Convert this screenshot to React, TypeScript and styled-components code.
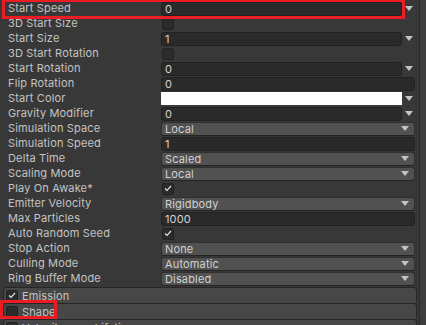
import React from "react"
import styled, { createGlobalStyle } from "styled-components"

const Global = createGlobalStyle`
    html, body {
        margin: 0;
        padding: 0;
        background: #383838;
    }
    body {
        font-family: Inter, "Noto Sans", sans-serif;
        font-size: 11px;
        letter-spacing: 0.15px;
        color: #c4c4c4;
    }
`;

const Window = styled.div`
    position: relative;
    display: flex;
    width: 426px;
    height: 325px;
    overflow: hidden;
    background: #383838;
`;
const Panel = styled.div`
    flex: 1;
    padding-top: 1px;
`;
const Scrollbar = styled.div`
    width: 6px;
    border-left: 1px solid #2b2b2b;
    background: #3e3e3e;
`;
const Row = styled.div`
    display: grid;
    grid-template-columns: 153px 1fr;
    align-items: center;
    height: 15px;
    padding: 0 4px 0 8px;
`;
const Label = styled.div`
    white-space: nowrap;
    line-height: 15px;
`;
const Control = styled.div`
    display: flex;
    align-items: center;
    height: 15px;
`;
const TextField = styled.div`
    flex: 1;
    height: 12px;
    line-height: 12px;
    padding-left: 3px;
    background: #2a2a2a;
    border: 1px solid #212121;
    border-radius: 3px;
    color: #d2d2d2;
`;
const ColorField = styled.div`
    flex: 1;
    height: 13px;
    background: #ffffff;
`;
const CurveArrow = styled.div`
    width: 13px;
    display: flex;
    justify-content: center;
    align-items: center;
`;
const Popup = styled.div`
    flex: 1;
    display: flex;
    align-items: center;
    justify-content: space-between;
    height: 12px;
    padding: 0 5px 0 3px;
    background: #515151;
    border: 1px solid #303030;
    border-bottom-color: #242424;
    border-radius: 3px;
    color: #d2d2d2;
    line-height: 12px;
`;
const Box = styled.div`
    width: 10px;
    height: 10px;
    margin-left: 1px;
    background: #2b2b2b;
    border: 1px solid #222;
    border-radius: 2px;
    display: flex;
    align-items: center;
    justify-content: center;
`;
const Modules = styled.div`
    margin: 1px 2px 0 3px;
`;
const ModuleHeader = styled.div`
    display: flex;
    align-items: center;
    gap: 4px;
    height: 15px;
    padding-left: 1px;
    background: #474747;
    border: 1px solid #262626;
    border-radius: 3px;
    margin-bottom: -1px;
    color: #c4c4c4;
`;
const Highlight = styled.div`
    position: absolute;
    border: 3px solid #ec1c24;
    pointer-events: none;
`;

const Arrow = () => (
    <svg width="8" height="5" viewBox="0 0 8 5">
        <polygon points="0,0 8,0 4,5" fill="#c4c4c4" />
    </svg>
)

const Check = ({ on }: { on?: boolean }) => (
    <Box>
        {on && (
            <svg width="8" height="7" viewBox="0 0 8 7">
                <polyline points="1,3.5 3,5.5 7,1" fill="none" stroke="#e0e0e0" strokeWidth="1.2" />
            </svg>
        )}
    </Box>
)

type Field =
    | { kind: "curve"; value: string }
    | { kind: "text"; value: string }
    | { kind: "popup"; value: string }
    | { kind: "check"; on: boolean }
    | { kind: "color" }

const rows: [string, Field][] = [
    ["Start Speed", { kind: "curve", value: "0" }],
    ["3D Start Size", { kind: "check", on: false }],
    ["Start Size", { kind: "curve", value: "1" }],
    ["3D Start Rotation", { kind: "check", on: false }],
    ["Start Rotation", { kind: "curve", value: "0" }],
    ["Flip Rotation", { kind: "text", value: "0" }],
    ["Start Color", { kind: "color" }],
    ["Gravity Modifier", { kind: "curve", value: "0" }],
    ["Simulation Space", { kind: "popup", value: "Local" }],
    ["Simulation Speed", { kind: "text", value: "1" }],
    ["Delta Time", { kind: "popup", value: "Scaled" }],
    ["Scaling Mode", { kind: "popup", value: "Local" }],
    ["Play On Awake*", { kind: "check", on: true }],
    ["Emitter Velocity", { kind: "popup", value: "Rigidbody" }],
    ["Max Particles", { kind: "text", value: "1000" }],
    ["Auto Random Seed", { kind: "check", on: true }],
    ["Stop Action", { kind: "popup", value: "None" }],
    ["Culling Mode", { kind: "popup", value: "Automatic" }],
    ["Ring Buffer Mode", { kind: "popup", value: "Disabled" }],
]

function renderField(f: Field) {
    switch (f.kind) {
        case "curve":
            return (<><TextField>{f.value}</TextField><CurveArrow><Arrow /></CurveArrow></>)
        case "text":
            return <TextField>{f.value}</TextField>
        case "popup":
            return <Popup><span>{f.value}</span><Arrow /></Popup>
        case "check":
            return <Check on={f.on} />
        case "color":
            return (<><ColorField /><CurveArrow><Arrow /></CurveArrow></>)
    }
}

const modules: [string, boolean][] = [
    ["Emission", true],
    ["Shape", false],
    ["Velocity over Lifetime", false],
]

export default function App() {
    return (
        <Window>
            <Global />
            <Panel>
                {rows.map(([label, field]) => (
                    <Row key={label}>
                        <Label>{label}</Label>
                        <Control>{renderField(field)}</Control>
                    </Row>
                ))}
                <Modules>
                    {modules.map(([name, on]) => (
                        <ModuleHeader key={name}>
                            <Check on={on} />
                            <span>{name}</span>
                        </ModuleHeader>
                    ))}
                </Modules>
            </Panel>
            <Scrollbar />
            <Highlight style={{ left: 2, top: -1, width: 397, height: 14 }} />
            <Highlight style={{ left: 0, top: 300, width: 51, height: 13 }} />
        </Window>
    )
}
